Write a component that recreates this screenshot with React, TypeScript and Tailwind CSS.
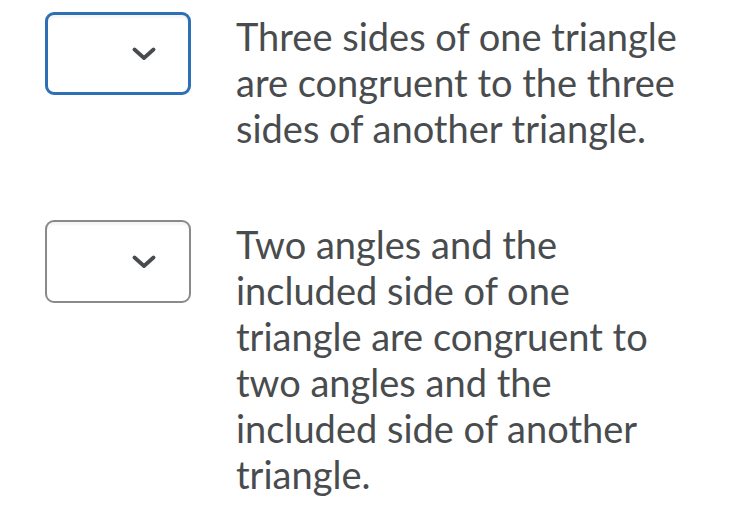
import React from "react";

type Item = { text: string; focused?: boolean };

const items: Item[] = [
  { text: "Three sides of one triangle are congruent to the three sides of another triangle.", focused: true },
  { text: "Two angles and the included side of one triangle are congruent to two angles and the included side of another triangle." },
];

function Chevron() {
  return (
    <svg width="24" height="14" viewBox="0 0 24 14" fill="none" className="block">
      <path d="M2.5 2.5 L12 11 L21.5 2.5" stroke="#494c4e" strokeWidth="3.8" strokeLinecap="round" strokeLinejoin="round" />
    </svg>
  );
}

function SelectBox({ focused }: { focused?: boolean }) {
  return (
    <div
      className={
        focused
          ? "relative w-[146px] h-[83px] shrink-0 rounded-[9px] border-[3px] border-[#2f6fb5] bg-white shadow-[inset_0_3px_2px_rgba(0,0,0,0.04)] flex items-center justify-end pr-[32px]"
          : "relative w-[146px] h-[83px] shrink-0 rounded-[9px] border-2 border-[#8a8a8a] bg-white shadow-[inset_0_3px_2px_rgba(0,0,0,0.04)] flex items-center justify-end pr-[33px]"
      }
    >
      <Chevron />
    </div>
  );
}

export default function App() {
  return (
    <div className="w-[744px] h-[510px] bg-white overflow-hidden pt-[12px] pl-[45px] flex flex-col gap-[69px]" style={{ fontFamily: "Lato, 'Noto Sans', sans-serif" }}>
      {items.map((it, i) => (
        <div key={i} className="flex items-start gap-[45px]">
          <SelectBox focused={it.focused} />
          <p className="w-[458px] text-[38px] leading-[46px] text-[#494c4e] mt-[1px]">{it.text}</p>
        </div>
      ))}
    </div>
  );
}
